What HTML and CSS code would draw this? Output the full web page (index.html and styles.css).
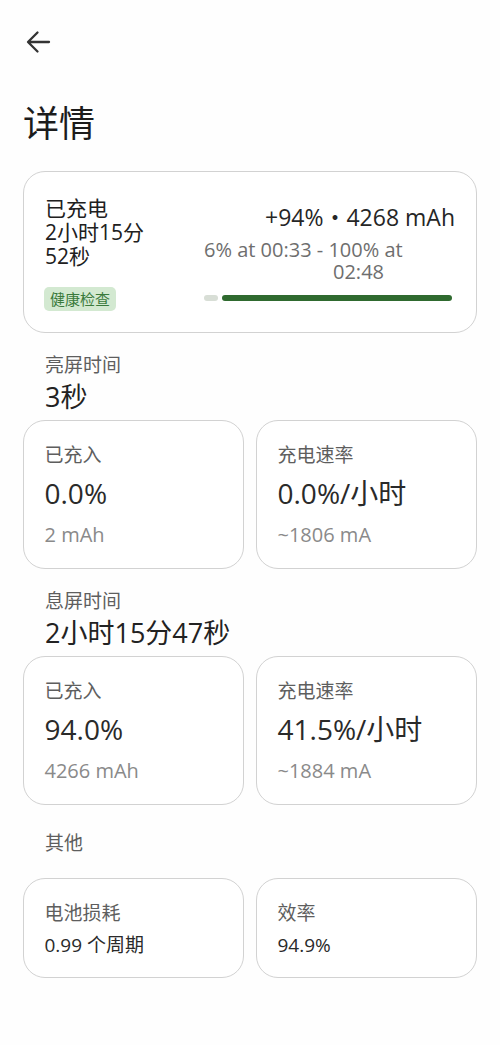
FILE: index.html
```html
<!DOCTYPE html>
<html lang="zh-CN">
<head>
<meta charset="utf-8">
<title>详情</title>
<link rel="stylesheet" href="styles.css">
</head>
<body>
<div class="page">
  <div class="topbar">
    <svg class="back" width="26" height="24" viewBox="0 0 26 24" aria-hidden="true">
      <path d="M24 12H3.5M12.5 2.5L3 12l9.5 9.5" fill="none" stroke="#333" stroke-width="2.3" stroke-linecap="round" stroke-linejoin="round"/>
    </svg>
  </div>
  <h1 class="title">详情</h1>

  <div class="card main">
    <div class="main-left">
      <div class="charged">已充电<br>2小时15分<br>52秒</div>
      <span class="badge">健康检查</span>
    </div>
    <div class="main-right">
      <div class="gain">+94%・4268 mAh</div>
      <div class="range">
        <span class="range-l1">6% at 00:33 - 100% at</span>
        <span class="range-l2">02:48</span>
      </div>
      <div class="bar">
        <span class="bar-start"></span>
        <span class="bar-fill"></span>
      </div>
    </div>
  </div>

  <div class="section">
    <div class="sec-label">亮屏时间</div>
    <div class="sec-value">3秒</div>
  </div>
  <div class="grid">
    <div class="card stat">
      <div class="stat-label">已充入</div>
      <div class="stat-value">0.0%</div>
      <div class="stat-sub">2 mAh</div>
    </div>
    <div class="card stat">
      <div class="stat-label">充电速率</div>
      <div class="stat-value">0.0%/小时</div>
      <div class="stat-sub">~1806 mA</div>
    </div>
  </div>

  <div class="section">
    <div class="sec-label">息屏时间</div>
    <div class="sec-value">2小时15分47秒</div>
  </div>
  <div class="grid">
    <div class="card stat">
      <div class="stat-label">已充入</div>
      <div class="stat-value">94.0%</div>
      <div class="stat-sub">4266 mAh</div>
    </div>
    <div class="card stat">
      <div class="stat-label">充电速率</div>
      <div class="stat-value">41.5%/小时</div>
      <div class="stat-sub">~1884 mA</div>
    </div>
  </div>

  <div class="section other">
    <div class="sec-label">其他</div>
  </div>
  <div class="grid">
    <div class="card small">
      <div class="stat-label">电池损耗</div>
      <div class="small-value">0.99 个周期</div>
    </div>
    <div class="card small">
      <div class="stat-label">效率</div>
      <div class="small-value">94.9%</div>
    </div>
  </div>
</div>
</body>
</html>
```

FILE: styles.css
```css
* { box-sizing: border-box; }
html, body {
  margin: 0;
  padding: 0;
  background: #fefefe;
}
body {
  font-family: "Open Sans", "Noto Sans CJK SC", sans-serif;
  color: #222;
}
.page {
  padding: 0 23px;
}
.topbar {
  height: 84px;
  padding-top: 30px;
  padding-left: 2px;
}
.back { display: block; }
.title {
  margin: 16px 0 23px 0;
  font-size: 36px;
  line-height: 48px;
  font-weight: 400;
  color: #1c1c1c;
}
.card {
  border: 1.5px solid #d2d2d2;
  border-radius: 22px;
  background: #fff;
}
.main {
  height: 162px;
  padding: 24px 21px 20px 21px;
  display: grid;
  grid-template-columns: 1fr 251px;
}
.main-left {
  display: flex;
  flex-direction: column;
  align-items: flex-start;
}
.charged {
  font-size: 21px;
  line-height: 24px;
  color: #202020;
  white-space: nowrap;
}
.badge {
  margin-top: 19px;
  margin-left: -1px;
  height: 24px;
  padding: 0 6px;
  border-radius: 5px;
  background: #d3e9d1;
  color: #3a7a3c;
  font-size: 15px;
  line-height: 24px;
}
.main-right {
  display: flex;
  flex-direction: column;
}
.gain {
  margin-top: 8px;
  text-align: right;
  font-size: 23px;
  line-height: 26px;
  color: #262626;
  white-space: nowrap;
}
.range {
  margin-top: 9px;
  font-size: 20px;
  line-height: 22px;
  color: #6e6e6e;
}
.range-l1, .range-l2 { display: block; white-space: nowrap; }
.range-l2 { padding-left: 129px; }
.bar {
  margin-top: 12px;
  display: flex;
  gap: 4px;
  width: 248px;
}
.bar-start {
  width: 14px;
  height: 6px;
  border-radius: 3px;
  background: #d8ded6;
}
.bar-fill {
  flex: 1;
  height: 6px;
  border-radius: 3px;
  background: #2f6a2f;
}
.section {
  margin-top: 21px;
  padding-left: 22px;
}
.sec-label {
  font-size: 19px;
  line-height: 22px;
  color: #5e5e5e;
}
.sec-value {
  margin-top: 6px;
  font-size: 27px;
  line-height: 30px;
  color: #222;
  white-space: nowrap;
}
.grid {
  margin-top: 8px;
  display: grid;
  grid-template-columns: 1fr 1fr;
  gap: 12px;
}
.stat {
  height: 149px;
  padding: 23px 20px 0 20.5px;
}
.stat-label {
  font-size: 19px;
  line-height: 22px;
  color: #5e5e5e;
}
.stat-value {
  margin-top: 10px;
  font-size: 28px;
  line-height: 34px;
  color: #2a2a2a;
  white-space: nowrap;
}
.stat-sub {
  margin-top: 14px;
  font-size: 20px;
  line-height: 22px;
  color: #8a8a8a;
}
.other { margin-top: 27px; }
.other + .grid { margin-top: 24px; }
.small {
  height: 100px;
  padding: 23px 20px 0 20.5px;
}
.small-value {
  margin-top: 10px;
  font-size: 19px;
  line-height: 22px;
  color: #2a2a2a;
}
```
